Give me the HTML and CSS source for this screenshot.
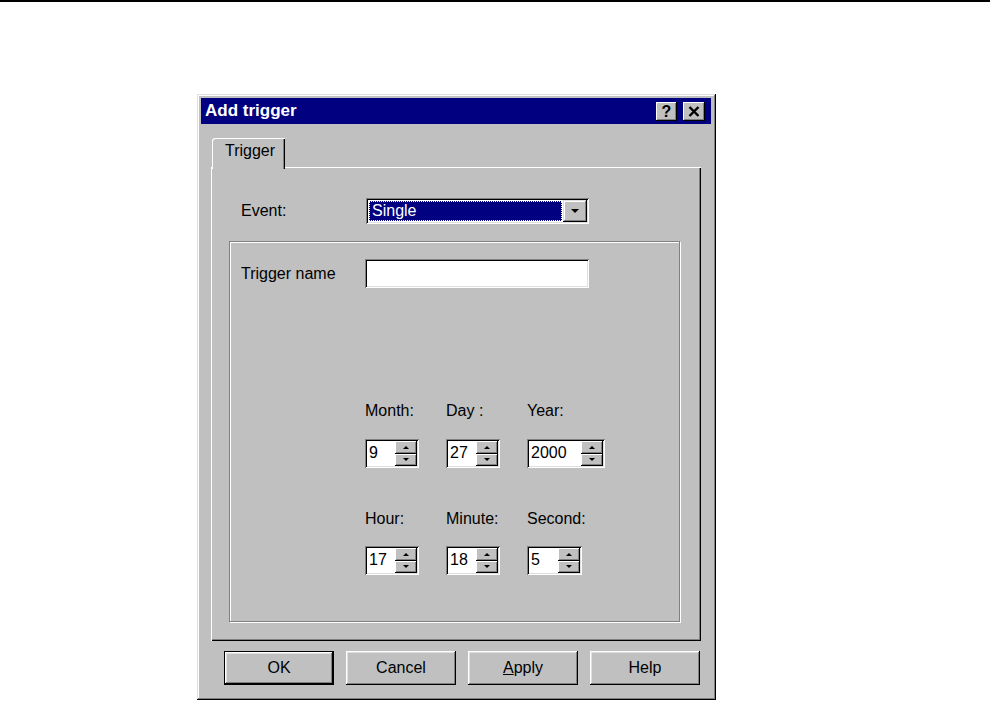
FILE: index.html
```html
<!DOCTYPE html>
<html lang="en">
<head>
  <meta charset="UTF-8" />
  <title>Add trigger</title>
  <meta name="viewport" content="width=device-width, initial-scale=1" />
  <link rel="stylesheet" href="styles.css">
</head>
<body>

  <div class="page-rule"></div>

  <div class="dialog">
    <div class="titlebar">
      <span class="title">Add trigger</span>
      <div class="caption-buttons">
        <div class="cap-btn help">?</div>
        <div class="cap-btn">
          <svg width="12" height="11" viewBox="0 0 12 11">
            <path d="M1.5 1 L10.5 10 M10.5 1 L1.5 10" stroke="#000" stroke-width="2.4" fill="none" />
          </svg>
        </div>
      </div>
    </div>

    <div class="tabs">
      <div class="tab">Trigger</div>
    </div>

    <div class="panel">
      <div class="event-row">
        <span>Event:</span>
        <div class="combo">
          <div class="combo-value">Single</div>
          <div class="combo-arrow"></div>
        </div>
      </div>

      <div class="group">
        <div class="name-row">
          <span>Trigger name</span>
          <div class="field"></div>
        </div>

        <div class="spin-grid">
          <div class="spin-col">
            <span>Month:</span>
            <div class="spin w54"><span class="spin-value">9</span><div class="spin-buttons"><div class="spin-up"></div><div class="spin-down"></div></div></div>
          </div>
          <div class="spin-col">
            <span>Day :</span>
            <div class="spin w54"><span class="spin-value">27</span><div class="spin-buttons"><div class="spin-up"></div><div class="spin-down"></div></div></div>
          </div>
          <div class="spin-col">
            <span>Year:</span>
            <div class="spin w78"><span class="spin-value">2000</span><div class="spin-buttons"><div class="spin-up"></div><div class="spin-down"></div></div></div>
          </div>
        </div>

        <div class="spin-grid time">
          <div class="spin-col">
            <span>Hour:</span>
            <div class="spin w54"><span class="spin-value">17</span><div class="spin-buttons"><div class="spin-up"></div><div class="spin-down"></div></div></div>
          </div>
          <div class="spin-col">
            <span>Minute:</span>
            <div class="spin w54"><span class="spin-value">18</span><div class="spin-buttons"><div class="spin-up"></div><div class="spin-down"></div></div></div>
          </div>
          <div class="spin-col">
            <span>Second:</span>
            <div class="spin w55"><span class="spin-value">5</span><div class="spin-buttons"><div class="spin-up"></div><div class="spin-down"></div></div></div>
          </div>
        </div>
      </div>
    </div>

    <div class="buttons">
      <div class="btn default">OK</div>
      <div class="btn">Cancel</div>
      <div class="btn"><u>A</u>pply</div>
      <div class="btn">Help</div>
    </div>
  </div>

</body>
</html>
```

FILE: styles.css
```css
* {
  box-sizing: border-box;
}
body {
  margin: 0;
  background: #fff;
  font-family: "Liberation Sans", Arial, sans-serif;
  font-size: 16px;
  line-height: 18px;
  color: #000;
}
.page-rule {
  width: 990px;
  height: 2px;
  background: #000;
}
.dialog {
  width: 519px;
  height: 606px;
  margin: 92px 0 0 197px;
  padding: 4px 5px 0 4px;
  background: #c0c0c0;
  box-shadow: inset -1px -1px #000, inset 1px 1px #dfdfdf, inset -2px -2px #808080, inset 2px 2px #fff;
}
.titlebar {
  height: 26px;
  background: #000080;
  display: flex;
  align-items: center;
  justify-content: space-between;
  padding: 0 6px 0 4px;
}
.title {
  color: #fff;
  font-weight: bold;
  font-size: 17px;
}
.caption-buttons {
  display: flex;
  gap: 6px;
}
.cap-btn {
  width: 22px;
  height: 19px;
  background: #c0c0c0;
  display: flex;
  align-items: center;
  justify-content: center;
  font-weight: bold;
  font-size: 16px;
  box-shadow: inset -1px -1px #000, inset 1px 1px #fff, inset -2px -2px #808080;
}
.cap-btn.help {
  width: 21px;
  padding-top: 1px;
}
.tabs {
  display: flex;
  margin-top: 14px;
  padding: 0 10px 0 11px;
}
.tab {
  position: relative;
  z-index: 1;
  width: 73px;
  height: 31px;
  margin-bottom: -2px;
  padding: 4px 0 0 13px;
  background: #c0c0c0;
  border-top-left-radius: 3px;
  box-shadow: inset 1px 1px #fff, inset -1px 0 #000, inset -2px 0 #808080;
}
.panel {
  height: 474px;
  margin: 0 10px;
  padding: 31px 21px 0 18px;
  box-shadow: inset 1px 1px #fff, inset -1px -1px #000, inset -2px -2px #808080;
}
.event-row {
  display: grid;
  grid-template-columns: 125px 223px;
  align-items: center;
  padding-left: 12px;
  height: 26px;
}
.combo {
  display: flex;
  height: 26px;
  padding: 2px;
  background: #fff;
  box-shadow: inset 1px 1px #808080, inset -1px -1px #fff, inset 2px 2px #000, inset -2px -2px #dfdfdf;
}
.combo-value {
  flex: 1;
  margin: 1px 1px 1px 1px;
  padding-left: 2px;
  background: #000080;
  color: #fff;
  border: 1px dotted #fff;
  line-height: 18px;
}
.combo-arrow {
  width: 24px;
  background: #c0c0c0;
  display: flex;
  align-items: center;
  justify-content: center;
  box-shadow: inset -1px -1px #000, inset 1px 1px #dfdfdf, inset -2px -2px #808080, inset 2px 2px #fff;
}
.combo-arrow::after {
  content: "";
  border-left: 4px solid transparent;
  border-right: 4px solid transparent;
  border-top: 4px solid #000;
}
.group {
  height: 381px;
  margin-top: 17px;
  padding: 17px 0 0 11px;
  border: 1px solid #808080;
  box-shadow: inset 1px 1px #fff, 1px 1px #fff;
}
.name-row {
  display: grid;
  grid-template-columns: 124px 224px;
  align-items: center;
  height: 29px;
}
.field {
  height: 29px;
  background: #fff;
  box-shadow: inset 1px 1px #808080, inset -1px -1px #fff, inset 2px 2px #000, inset -2px -2px #dfdfdf;
}
.spin-grid {
  display: grid;
  grid-template-columns: 81px 81px 81px;
  margin: 114px 0 0 124px;
}
.spin-grid.time {
  margin-top: 42px;
}
.spin-col {
  display: flex;
  flex-direction: column;
  gap: 19px;
}
.time .spin-col {
  gap: 18px;
}
.spin {
  display: flex;
  height: 29px;
  padding: 2px;
  background: #fff;
  box-shadow: inset 1px 1px #808080, inset -1px -1px #fff, inset 2px 2px #000, inset -2px -2px #dfdfdf;
}
.w54 { width: 54px; }
.w55 { width: 55px; }
.w78 { width: 78px; }
.spin-value {
  flex: 1;
  padding-left: 2px;
  line-height: 24px;
}
.spin-buttons {
  width: 22px;
  display: flex;
  flex-direction: column;
}
.spin-up, .spin-down {
  flex: 1;
  background: #c0c0c0;
  display: flex;
  align-items: center;
  justify-content: center;
  box-shadow: inset -1px -1px #000, inset 1px 1px #fff, inset -2px -2px #808080;
}
.spin-up::after {
  content: "";
  border-left: 3px solid transparent;
  border-right: 3px solid transparent;
  border-bottom: 3px solid #000;
}
.spin-down::after {
  content: "";
  border-left: 3px solid transparent;
  border-right: 3px solid transparent;
  border-top: 3px solid #000;
}
.buttons {
  display: flex;
  gap: 12px;
  margin: 10px 0 0 23px;
}
.btn {
  width: 110px;
  height: 34px;
  display: flex;
  align-items: center;
  justify-content: center;
  background: #c0c0c0;
  box-shadow: inset -1px -1px #000, inset 1px 1px #fff, inset -2px -2px #808080, inset 2px 2px #dfdfdf;
}
.btn.default {
  box-shadow: inset 0 0 0 1px #000, inset -2px -2px #000, inset 2px 2px #fff, inset -3px -3px #808080, inset 3px 3px #dfdfdf;
}
```
